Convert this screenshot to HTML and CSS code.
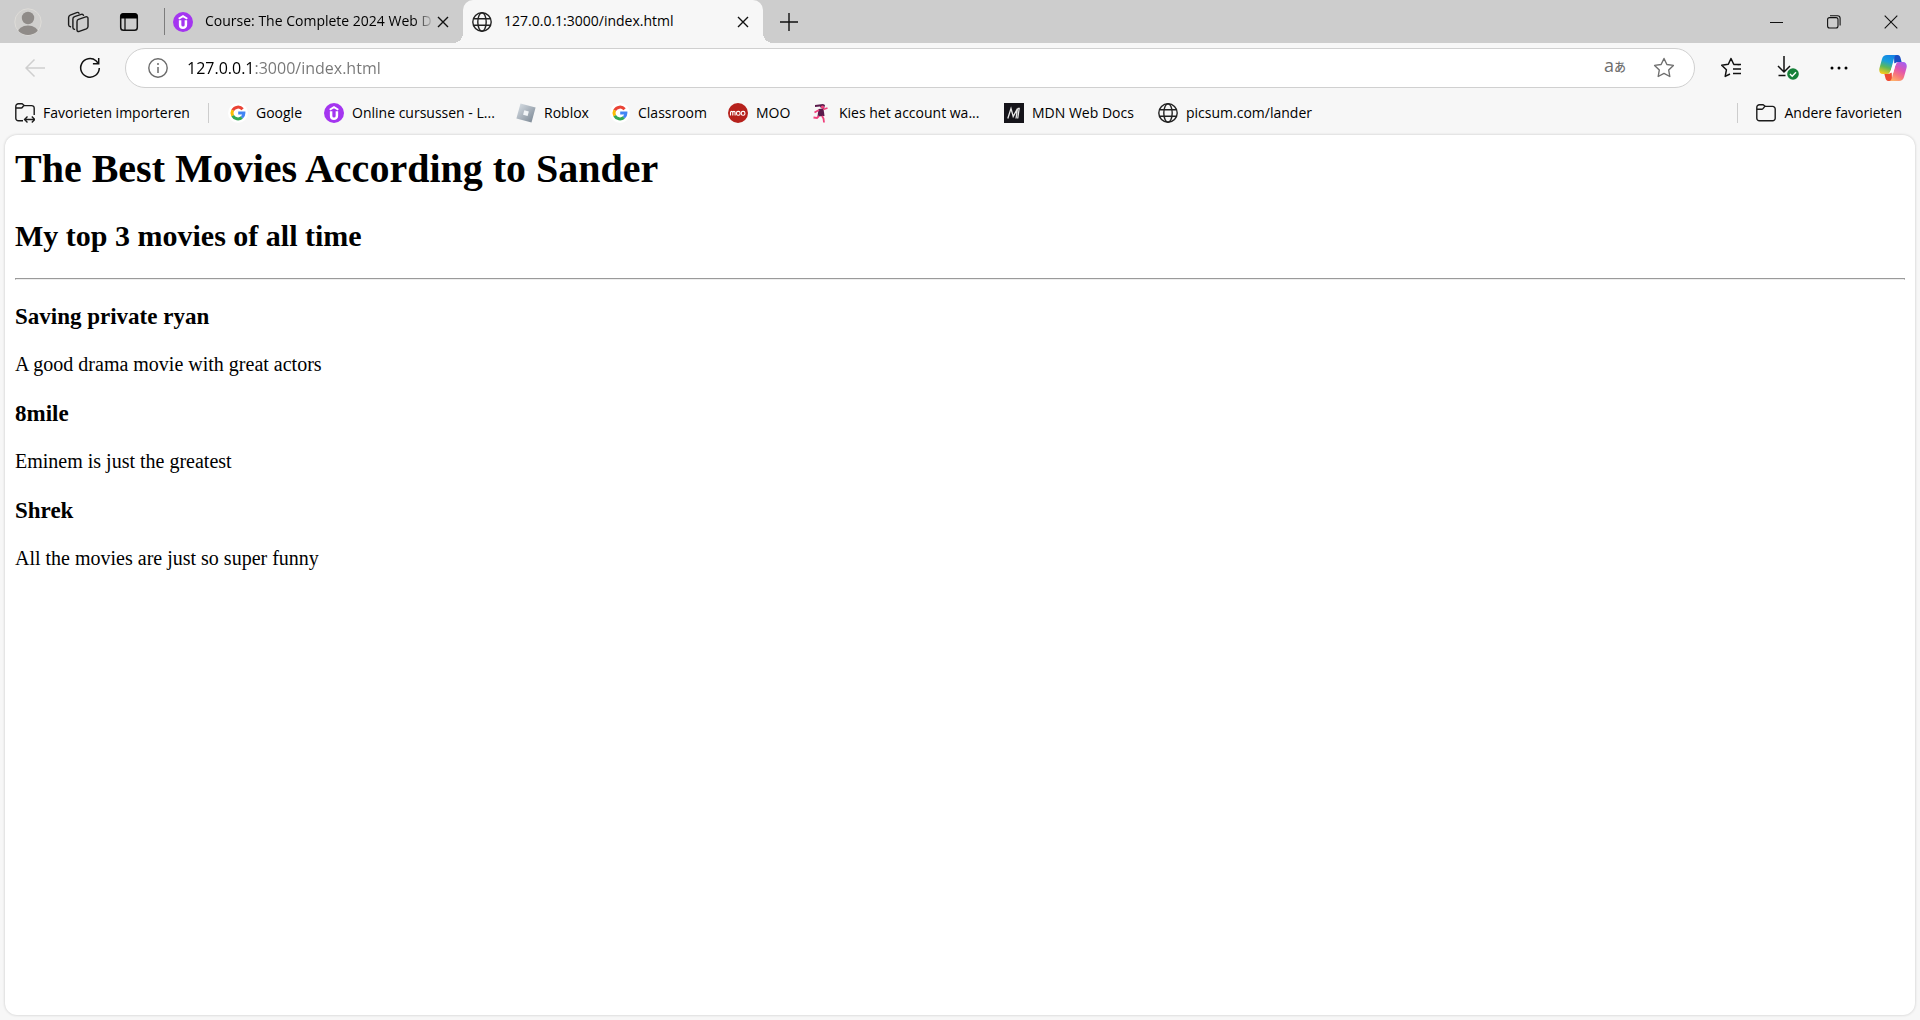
FILE: index.html
```html
<!DOCTYPE html>
<html lang="nl">
<head>
<meta charset="utf-8">
<title>127.0.0.1:3000/index.html</title>
<link rel="stylesheet" href="styles.css">
</head>
<body>
<svg class="defs" aria-hidden="true">
  <defs>
    <linearGradient id="steel" x1="0" y1="0" x2="1" y2="1"><stop offset="0" stop-color="#dde3e9"/><stop offset="1" stop-color="#75828f"/></linearGradient>
    <linearGradient id="cp-left" x1="0.6" y1="0" x2="0.3" y2="1"><stop offset="0" stop-color="#1484e6"/><stop offset="0.35" stop-color="#18a0dc"/><stop offset="0.65" stop-color="#5cb85a"/><stop offset="1" stop-color="#f6c91c"/></linearGradient>
    <linearGradient id="cp-right" x1="0.8" y1="0" x2="0.3" y2="1"><stop offset="0" stop-color="#a45ff0"/><stop offset="0.4" stop-color="#e055b0"/><stop offset="0.7" stop-color="#f8787c"/><stop offset="1" stop-color="#fdb06a"/></linearGradient>
    <symbol id="globe" viewBox="0 0 20 20"><g fill="none" stroke="#222" stroke-width="1.4"><circle cx="10" cy="10" r="9.2"/><ellipse cx="10" cy="10" rx="4.2" ry="9.2"/><path d="M1.6 6.8h16.8M1.6 13.2h16.8"/></g></symbol>
    <symbol id="udemy" viewBox="0 0 20 20"><circle cx="10" cy="10" r="10" fill="#a435f0"/><path d="M5.700 6.800L10 4.200l4.300 2.600" fill="none" stroke="#fff" stroke-width="1.900"/><path d="M7.100 8.200v4.800c0 3.700 5.800 3.700 5.800 0V8.200" fill="none" stroke="#fff" stroke-width="2.500"/></symbol>
    <symbol id="google" viewBox="0 0 20 20"><circle cx="10" cy="10" r="10" fill="#fff"/><g fill="none" stroke-width="3"><path d="M14.600 6.200A6 6 0 0 0 4.700 7.400" stroke="#ea4335"/><path d="M4.700 7.200a6 6 0 0 0 0 5.600" stroke="#fbbc05"/><path d="M4.700 12.700a6 6 0 0 0 9.200 1.800" stroke="#34a853"/><path d="M10.200 10h5.700a6 6 0 0 1-2 4.500" stroke="#4285f4"/></g></symbol>
    <symbol id="folder" viewBox="0 0 20 20"><g fill="none" stroke="#1b1b1b" stroke-width="1.4" stroke-linejoin="round"><path d="M.8 5v10.200a2.600 2.600 0 0 0 2.600 2.600h13.200a2.600 2.600 0 0 0 2.600-2.600V6a2.600 2.600 0 0 0-2.600-2.600H9.200L7.200 1.800H3.400A2.600 2.600 0 0 0 .8 4.400z"/><path d="M.8 6.200h5.400c1.400 0 1.800-2.800 3-2.800"/></g></symbol>
    <symbol id="close" viewBox="0 0 12 12"><path d="M1 1l10 10M11 1L1 11" fill="none" stroke="#111" stroke-width="1.4"/></symbol>
  </defs>
</svg>

<header class="browser">
  <div class="tabstrip">
    <div class="tools">
      <button class="tool" aria-label="Profiel"><svg width="28" height="28" viewBox="0 0 28 28"><clipPath id="face"><circle cx="14" cy="14" r="13"/></clipPath><circle cx="14" cy="14" r="13.200" fill="#d0cfcd" stroke="#dedcd8"/><g clip-path="url(#face)" fill="#8f8b88"><circle cx="14" cy="10" r="6.200"/><ellipse cx="14" cy="25" rx="10.500" ry="7.500"/></g></svg></button>
      <button class="tool" aria-label="Werkruimten"><svg width="22" height="22" viewBox="0 0 22 22" fill="none" stroke="#1b1b1b" stroke-width="1.400" stroke-linejoin="round" stroke-linecap="round"><path d="M11.500 8.300l7.200-2.400c1.300-.4 2.300.2 2.300 1.500v8c0 1.300-.7 2-1.700 2.400l-7 2.600c-1.300.5-2.300-.2-2.300-1.500v-8.200c0-1.200.4-2 1.500-2.400z"/><path d="M7.500 18.400c-1.100-.3-1.600-1-1.600-2V8c0-1.200.5-2 1.600-2.300l6.700-2.300c1.100-.3 2 .1 2.300 1"/><path d="M3.500 15.800c-1.300-.3-1.900-1-1.900-2.100V6.500c0-1.200.5-2 1.600-2.400l6.500-2.500c1.100-.4 2 0 2.300.7"/></svg></button>
      <button class="tool" aria-label="Tabbladmenu"><svg width="20" height="20" viewBox="0 0 20 20"><rect x="1.700" y="1.700" width="16.600" height="16.600" rx="2.800" fill="none" stroke="#111" stroke-width="1.500"/><path d="M1.500 6.500V4A2.700 2.700 0 0 1 4.200 1.300h11.600A2.700 2.700 0 0 1 18.500 4v2.500z"/><path d="M6 6v12" stroke="#111" stroke-width="1.300"/></svg></button>
    </div>
    <div class="tab">
      <svg class="icon"><use href="#udemy"/></svg>
      <span class="tab-title faded">Course: The Complete 2024 Web D</span>
      <button class="tab-close" aria-label="Tabblad sluiten"><svg width="12" height="12"><use href="#close"/></svg></button>
    </div>
    <div class="tab active">
      <svg class="icon"><use href="#globe"/></svg>
      <span class="tab-title">127.0.0.1:3000/index.html</span>
      <button class="tab-close" aria-label="Tabblad sluiten"><svg width="12" height="12"><use href="#close"/></svg></button>
    </div>
    <button class="new-tab" aria-label="Nieuw tabblad"><svg width="18" height="18" viewBox="0 0 18 18"><path d="M9 0v18M0 9h18" stroke="#111" stroke-width="1.400"/></svg></button>
    <div class="window-controls">
      <button aria-label="Minimaliseren"><svg width="14" height="14" viewBox="0 0 14 14"><path d="M0 7.500h13" stroke="#111"/></svg></button>
      <button aria-label="Herstellen"><svg width="14" height="14" viewBox="0 0 14 14" fill="none" stroke="#111" stroke-width="1.100"><rect x=".6" y="2.600" width="10.400" height="10.400" rx="2"/><path d="M3 .7h7.500a2.600 2.600 0 0 1 2.600 2.600V10.500"/></svg></button>
      <button aria-label="Sluiten"><svg width="14" height="14" viewBox="0 0 14 14"><path d="M.7.7l12.600 12.600M13.300.7L.7 13.300" stroke="#111" stroke-width="1.100"/></svg></button>
    </div>
  </div>

  <div class="toolbar">
    <button class="nav" aria-label="Terug" disabled><svg width="20" height="20" viewBox="0 0 20 20"><path d="M9.500 1.500L1 10l8.500 8.500M1 10h19" fill="none" stroke="#cfcfcf" stroke-width="1.500"/></svg></button>
    <button class="nav" aria-label="Vernieuwen"><svg width="22" height="22" viewBox="0 0 22 22"><path d="M20.300 11a9.300 9.300 0 1 1-3.300-7.200l2.400 2.700M19.700 1v5.800h-5.800" fill="none" stroke="#111" stroke-width="1.500"/></svg></button>
    <form class="address">
      <button type="button" aria-label="Site-informatie"><svg width="20" height="20" viewBox="0 0 20 20"><circle cx="10" cy="10" r="9.200" fill="none" stroke="#6b6b6b" stroke-width="1.400"/><path d="M10 9v6" stroke="#6b6b6b" stroke-width="1.500"/><circle cx="10" cy="6" r="1" fill="#6b6b6b"/></svg></button>
      <input class="url" type="text" aria-label="Adres" value="127.0.0.1:3000/index.html">
      <button type="button" class="translate" aria-label="Vertalen"><span class="latin">a</span>あ</button>
      <button type="button" aria-label="Aan favorieten toevoegen"><svg width="22" height="22" viewBox="0 0 22 22"><path d="M11 1.500l2.900 6 6.500.9-4.700 4.600 1.100 6.500-5.800-3.100-5.800 3.100 1.100-6.500L1.600 8.400l6.500-.9z" fill="none" stroke="#6f6f6f" stroke-width="1.400" stroke-linejoin="round"/></svg></button>
    </form>
    <div class="actions">
      <button aria-label="Favorieten"><svg width="22" height="22" viewBox="0 0 22 22" fill="none" stroke="#111" stroke-width="1.500" stroke-linejoin="round"><path d="M19.500 7.800l-5.800-.5L11 1.500 8.300 7.300l-6.600.9L6.400 12.800 5.200 19.400 10 17M13.500 7.500H21M13 12h8M13 16.500h8"/></svg></button>
      <button aria-label="Downloads"><svg width="30" height="24" viewBox="-6 0 30 24"><path d="M8 0v15.500M2 10l6 6 6-6M2.500 19.500h7" fill="none" stroke="#111" stroke-width="1.500"/><circle cx="17" cy="18" r="5.800" fill="#168039"/><path d="M14 18l2.200 2.200 3.800-4" fill="none" stroke="#fff" stroke-width="1.400"/></svg></button>
      <button aria-label="Instellingen"><svg width="18" height="4" viewBox="0 0 18 4"><circle cx="2" cy="2" r="1.500"/><circle cx="9" cy="2" r="1.500"/><circle cx="16" cy="2" r="1.500"/></svg></button>
      <button aria-label="Copilot"><svg width="28" height="28" viewBox="0 0 28 28"><path d="M15 1h3.500c2 0 2.700 1.500 3.200 3.500L22.600 8H19c-2 0-3 1-3.700 3z" fill="#1a4fc4"/><path d="M13 27H9.500c-2 0-2.700-1.500-3.200-3.500L5.400 20H9c2 0 3-1 3.700-3z" fill="#ee4a32"/><path d="M8 1h10c-1.800 0-2.500 1.500-3.200 4l-2.600 10c-.9 3.200-1.700 5-4.200 5H4C.8 20-.3 17.300.5 14L3 5c.7-2.500 2.500-4 5-4z" fill="url(#cp-left)"/><path d="M20 27H10c1.800 0 2.500-1.500 3.200-4l2.600-10c.9-3.200 1.700-5 4.200-5h4c3.200 0 4.300 2.700 3.500 6L25 23c-.7 2.500-2.500 4-5 4z" fill="url(#cp-right)"/><path d="M14.500 9.200h3.300c-1 1-1.400 2.300-1.900 4l-1.700 5.600h-4c1.100-.8 1.500-2 2-3.800z" fill="#fff"/></svg></button>
    </div>
  </div>

  <nav class="bookmarks" aria-label="Favorietenbalk">
    <a class="bookmark" href="#"><svg class="icon" viewBox="0 0 20 20" fill="none" stroke="#1b1b1b" stroke-width="1.400" stroke-linejoin="round"><path d="M8 17.800H3.400A2.600 2.600 0 0 1 .8 15.200V3.400A2.600 2.600 0 0 1 3.400.8h3.800l2 1.800h7.400a2.600 2.600 0 0 1 2.600 2.600V12"/><path d="M.8 5h5.400c1.400 0 1.800-2.400 3-2.400M10 16.500h9.500M12.500 13.500l-3 3 3 3M16.800 13.500l3 3-3 3"/></svg>Favorieten importeren</a>
    <span class="divider"></span>
    <a class="bookmark" href="#"><svg class="icon"><use href="#google"/></svg>Google</a>
    <a class="bookmark" href="#"><svg class="icon"><use href="#udemy"/></svg>Online cursussen - L...</a>
    <a class="bookmark" href="#"><svg class="icon" viewBox="0 0 20 20"><path d="M4.500.4l15.100 4-4.100 15.200L.4 15.500z" fill="url(#steel)"/><path d="M8.300 7.200l4.500 1.200-1.200 4.500-4.500-1.200z" fill="#f2f5f8"/></svg>Roblox</a>
    <a class="bookmark" href="#"><svg class="icon"><use href="#google"/></svg>Classroom</a>
    <a class="bookmark" href="#"><svg class="icon" viewBox="0 0 20 20"><circle cx="10" cy="10" r="10" fill="#b6211c"/><path d="M2.500 12.500V9.500c0-1.500 2.300-1.500 2.300 0v3V9.500c0-1.500 2.300-1.500 2.300 0v3" fill="none" stroke="#fff" stroke-width="1.100"/><rect x="8.500" y="8.400" width="3.600" height="3.800" rx="1.500" fill="none" stroke="#fff" stroke-width="1.100"/><rect x="13.300" y="8.400" width="3.600" height="3.800" rx="1.500" fill="none" stroke="#fff" stroke-width="1.100"/></svg>MOO</a>
    <a class="bookmark" href="#"><svg class="icon" viewBox="0 0 20 20"><path d="M4 2l8-1 2 1-1 4-3-1-1-1.500L4 4z" fill="#5b1a4b"/><path d="M7.500 6l5-.5 1 7.500-7 .5z" fill="#5b1a4b"/><path d="M8 7L3.500 9.500M12 6.500l4.500-1.500M8 13l-2 2-3.500-.5M11 13l1.500 2.500.5 4" fill="none" stroke="#f0407c" stroke-width="1.800"/><circle cx="11.500" cy="4" r="1.600" fill="#f0407c"/></svg>Kies het account wa...</a>
    <a class="bookmark" href="#"><svg class="icon" viewBox="0 0 20 20"><path d="M0 0h20v20H0z" fill="#15141a"/><path d="M3.800 15.500L7 5.500l2.200 8L13.500 5.500 12 15.500M13.800 5.500h1.400l-1.500 10" fill="none" stroke="#e8e8e8" stroke-width="1.300"/></svg>MDN Web Docs</a>
    <a class="bookmark" href="#"><svg class="icon"><use href="#globe"/></svg>picsum.com/lander</a>
    <span class="divider"></span>
    <a class="bookmark" href="#"><svg class="icon"><use href="#folder"/></svg>Andere favorieten</a>
  </nav>
</header>

<main class="page">
  <h1>The Best Movies According to Sander</h1>
  <h2>My top 3 movies of all time</h2>
  <hr>
  <h3>Saving private ryan</h3>
  <p>A good drama movie with great actors</p>
  <h3>8mile</h3>
  <p>Eminem is just the greatest</p>
  <h3>Shrek</h3>
  <p>All the movies are just so super funny</p>
</main>
</body>
</html>
```
FILE: styles.css
```css
* { box-sizing: border-box; }

body {
  display: flex;
  flex-direction: column;
  min-height: 100vh;
  margin: 0;
  background: #f7f7f7;
  color: #000;
  font-family: "Open Sans", "Noto Sans CJK JP", sans-serif;
  font-size: 14px;
}

.defs { position: absolute; width: 0; height: 0; }

button {
  display: flex;
  flex: none;
  align-items: center;
  justify-content: center;
  padding: 0;
  border: 0;
  background: none;
  font: inherit;
}

svg { display: block; flex: none; }
.icon { width: 20px; height: 20px; }

/* Tab strip */
.tabstrip {
  display: flex;
  height: 43px;
  background: #cdcdcd;
}

.tools {
  display: flex;
  align-items: center;
  gap: 9px;
  margin-right: 14px;
  padding-left: 8px;
}
.tool { width: 40px; height: 40px; }
.tool + .tool { width: 42px; }

.tab {
  position: relative;
  display: flex;
  align-items: center;
  width: 299px;
  padding: 0 11px 0 8px;
}
.tab:not(.active) {
  border-left: 1px solid #7c7c7c;
  border-image: linear-gradient(#0000 9px, #7c7c7c 9px, #7c7c7c 34px, #0000 34px) 1;
}
.tab.active {
  width: 300px;
  padding-left: 9px;
  border-radius: 10px 10px 0 0;
  background: #f7f7f7;
}
.tab.active::before,
.tab.active::after {
  content: "";
  position: absolute;
  bottom: 0;
  width: 10px;
  height: 10px;
}
.tab.active::before {
  right: 100%;
  background: radial-gradient(circle at 0 0, #0000 10px, #f7f7f7 10px);
}
.tab.active::after {
  left: 100%;
  background: radial-gradient(circle at 100% 0, #0000 10px, #f7f7f7 10px);
}
.tab-title {
  flex: 1;
  min-width: 0;
  margin-left: 12px;
  padding-bottom: 2px;
  overflow: hidden;
  line-height: 20px;
  white-space: nowrap;
}
.faded {
  -webkit-mask-image: linear-gradient(to left, #0000, #000 20px);
  mask-image: linear-gradient(to left, #0000, #000 20px);
}
.tab-close { width: 18px; height: 24px; }
.new-tab { width: 52px; }

.window-controls { display: flex; margin: 0 1px 0 auto; }
.window-controls button { width: 57px; }

/* Toolbar */
.toolbar {
  display: flex;
  align-items: center;
  padding: 5px 7px 0;
}
.nav { width: 55px; height: 38px; }
.address {
  display: flex;
  flex: 1;
  align-items: center;
  gap: 9px;
  height: 40px;
  margin: 0 16px 0 8px;
  padding: 0 10px 0 12px;
  border: 1px solid #d0d0d0;
  border-radius: 20px;
  background: #fff;
}
.address button { width: 40px; height: 38px; }
.url {
  flex: 1;
  min-width: 0;
  height: 30px;
  padding: 0;
  border: 0;
  outline: 0;
  background: linear-gradient(to right, #000 67px, #767676 67px);
  -webkit-background-clip: text;
  background-clip: text;
  color: transparent;
  font: inherit;
  font-size: 16px;
}
.address .translate {
  align-items: baseline;
  padding-top: 6px;
  color: #6f6f6f;
  font-size: 12px;
  font-weight: 500;
  line-height: 20px;
}
.latin { font-size: 18px; font-weight: 400; }
.actions { display: flex; gap: 14px; }
.actions button { width: 40px; height: 40px; }

/* Favourites bar */
.bookmarks {
  display: grid;
  grid-template-columns: 193px 20px 96px 192px 94px 118px 83px 193px 154px 1fr 19px auto;
  align-items: center;
  height: 47px;
  padding: 3px 18px 0 15px;
}
.bookmark {
  display: flex;
  align-items: center;
  gap: 8px;
  color: inherit;
  line-height: 20px;
  text-decoration: none;
  white-space: nowrap;
}
.divider { width: 1px; height: 20px; background: #cdcdcd; }

/* Web page */
.page {
  flex: 1;
  margin: 0 5px 5px;
  padding: 11px 10px 10px;
  border-radius: 12px;
  background: #fff;
  box-shadow: 0 0 3px #0003;
  font-family: "Liberation Serif", serif;
  font-size: 20px;
  line-height: 23px;
}
h1 { margin: 0 0 27px; font-size: 40px; line-height: 46px; }
h2 { margin: 0 0 25px; font-size: 30px; line-height: 34px; }
hr {
  margin: 0 0 23px;
  border: 1px solid #9a9a9a;
  border-bottom-color: #eee;
}
h3 { margin: 0 0 23px; font-size: 23px; line-height: 27px; }
p { margin: 0 0 24px; }
```
